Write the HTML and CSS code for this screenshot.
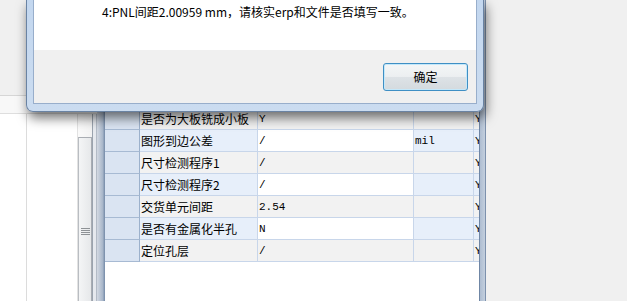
FILE: index.html
```html
<!DOCTYPE html>
<html>

<head>
  <meta charset="utf-8" />
  <title>参数确认</title>
  <meta name="viewport" content="width=device-width, initial-scale=1">
  <link rel="stylesheet" href="styles.css">
</head>

<body>
  <div class="app">
    <div class="side">
      <div class="side-top"></div>
      <div class="side-tab"></div>
      <div class="side-body">
        <div class="tree"></div>
        <div class="list"></div>
        <div class="splitter">
          <div class="grip"><span class="grip-lines"></span></div>
        </div>
        <div class="rail"></div>
      </div>
    </div>

    <div class="panel">
      <div class="panel-edge left"></div>
      <div class="panel-body">
        <div class="grid">
          <div class="row alt">
            <div class="head"></div>
            <div class="name">是否为大板铣成小板</div>
            <div class="value">Y</div>
            <div class="unit"></div>
            <div class="flag">Y</div>
          </div>
          <div class="row">
            <div class="head"></div>
            <div class="name">图形到边公差</div>
            <div class="value">/</div>
            <div class="unit">mil</div>
            <div class="flag">Y</div>
          </div>
          <div class="row alt">
            <div class="head"></div>
            <div class="name">尺寸检测程序1</div>
            <div class="value">/</div>
            <div class="unit"></div>
            <div class="flag">Y</div>
          </div>
          <div class="row">
            <div class="head"></div>
            <div class="name">尺寸检测程序2</div>
            <div class="value">/</div>
            <div class="unit"></div>
            <div class="flag">Y</div>
          </div>
          <div class="row alt">
            <div class="head"></div>
            <div class="name">交货单元间距</div>
            <div class="value">2.54</div>
            <div class="unit"></div>
            <div class="flag">Y</div>
          </div>
          <div class="row">
            <div class="head"></div>
            <div class="name">是否有金属化半孔</div>
            <div class="value">N</div>
            <div class="unit"></div>
            <div class="flag">Y</div>
          </div>
          <div class="row alt">
            <div class="head"></div>
            <div class="name">定位孔层</div>
            <div class="value">/</div>
            <div class="unit"></div>
            <div class="flag">Y</div>
          </div>
        </div>
      </div>
      <div class="panel-edge right"></div>
    </div>

    <div class="rest"></div>
  </div>

  <div class="msgbox">
    <div class="msgbox-inner">
      <div class="msgbox-text">4:PNL间距2.00959 mm，请核实erp和文件是否填写一致。</div>
      <div class="msgbox-footer">
        <button class="btn-ok">确定</button>
      </div>
    </div>
  </div>
</body>

</html>
```

FILE: styles.css
```css
* {
  margin: 0;
  padding: 0;
  box-sizing: border-box;
}

html,
body {
  height: 301px;
  overflow: hidden;
}

body {
  background: #f0f0f0;
  font: 12px/16px 'Noto Sans CJK SC', 'Liberation Sans', sans-serif;
  color: #000;
}

.app {
  display: flex;
  height: 301px;
  overflow: hidden;
}

/* left side: tree + list + splitter */
.side {
  display: flex;
  flex-direction: column;
  width: 97px;
}
.side-top {
  height: 96px;
  background: #f0f0f0;
  border-bottom: 1px solid #d6d6d6;
}
.side-tab {
  height: 18px;
  background: #f8f8f8;
  border-bottom: 1px solid #dedede;
}
.side-body {
  display: flex;
  flex: 1;
  min-height: 0;
  background: #fff;
}
.side .tree {
  width: 27px;
  border-right: 1px solid #dcdcdc;
}
.side .list {
  width: 50px;
}
.side .splitter {
  display: flex;
  flex-direction: column;
  width: 15px;
  padding-top: 23px;
  border-left: 1px solid #e2e2e2;
  background: linear-gradient(to right, #fafafa, #f2f2f2);
}
.side .grip {
  flex: 1;
  padding-top: 90px;
  border: 1px solid #a9adb3;
  border-left-color: #b9bdc2;
  border-bottom: 0;
  background: linear-gradient(to right, #f4f5f6, #e6e8ea);
}
.side .grip-lines {
  display: block;
  width: 9px;
  height: 7px;
  margin-left: 2px;
  background: repeating-linear-gradient(#8e9296 0, #8e9296 1px, transparent 1px, transparent 2px);
}
.side .rail {
  width: 5px;
  border-left: 1px solid #9aa3ae;
  border-right: 1px solid #b3bbc6;
  background: #e6e9ee;
}

/* grid panel */
.panel {
  display: flex;
  width: 389px;
}
.panel-edge.left {
  width: 8px;
  background: linear-gradient(to right, #d3d9e2, #a9b7ca 70%, #7389a7);
}
.panel-edge.right {
  width: 7px;
  border-left: 1px solid #6f86a5;
  border-right: 1px solid #7d91ad;
  background: linear-gradient(to right, #aebdd1, #c3cfde);
}
.panel-body {
  flex: 1;
  overflow: hidden;
  background: #fff;
}

.grid {
  margin-top: 108px;
}
.grid .row {
  display: grid;
  grid-template-columns: 35px 118px 156px 60px 40px;
  height: 22px;
}
.grid .row > div {
  border-right: 1px solid #c8d6ea;
  border-bottom: 1px solid #c8d6ea;
  padding: 3px 0 0 1px;
  line-height: 16px;
  white-space: nowrap;
  overflow: hidden;
}
.grid .head {
  background: #dae4f2;
}
.grid .row > .head {
  border-right-color: #9cb1cc;
  border-bottom-color: #a7bad3;
}
.grid .name,
.grid .unit,
.grid .flag {
  background: #e7effa;
}
.grid .value {
  background: #fff;
}
.grid .row.alt .name,
.grid .row.alt .value,
.grid .row.alt .unit,
.grid .row.alt .flag {
  background: #f2f2f2;
}
.grid .value,
.grid .unit,
.grid .flag {
  font-family: 'Liberation Mono', 'DejaVu Sans Mono', monospace;
  font-size: 11px;
}

.rest {
  flex: 1;
  background: #f0f0f0;
}

/* message box over the grid */
.msgbox {
  position: absolute;
  left: 26px;
  top: 0;
  width: 458px;
  padding: 0 6px 7px;
  border: 1px solid #6a83a3;
  border-top: 0;
  border-radius: 0 0 7px 7px;
  background: linear-gradient(#c3d7ef, #cbdcf0);
  box-shadow: 2px 6px 12px rgba(0, 0, 0, .55);
}
.msgbox-inner {
  border: 1px solid #98aecb;
  border-top: 0;
  background: #fff;
}
.msgbox-text {
  height: 50px;
  padding: 4px 0 0 68px;
}
.msgbox-footer {
  display: flex;
  justify-content: flex-end;
  align-items: flex-start;
  height: 53px;
  padding: 13px 8px 0 0;
  background: #f0f0f0;
}
.btn-ok {
  width: 85px;
  height: 28px;
  border: 1px solid #3f8fc4;
  border-radius: 3px;
  background: linear-gradient(#f4f6f7, #eceff1 48%, #dde2e6 52%, #d4dade);
  box-shadow: inset 0 0 0 1px #c4e8fa;
  font: 12px/16px 'Noto Sans CJK SC', sans-serif;
  color: #000;
  cursor: pointer;
}
```
